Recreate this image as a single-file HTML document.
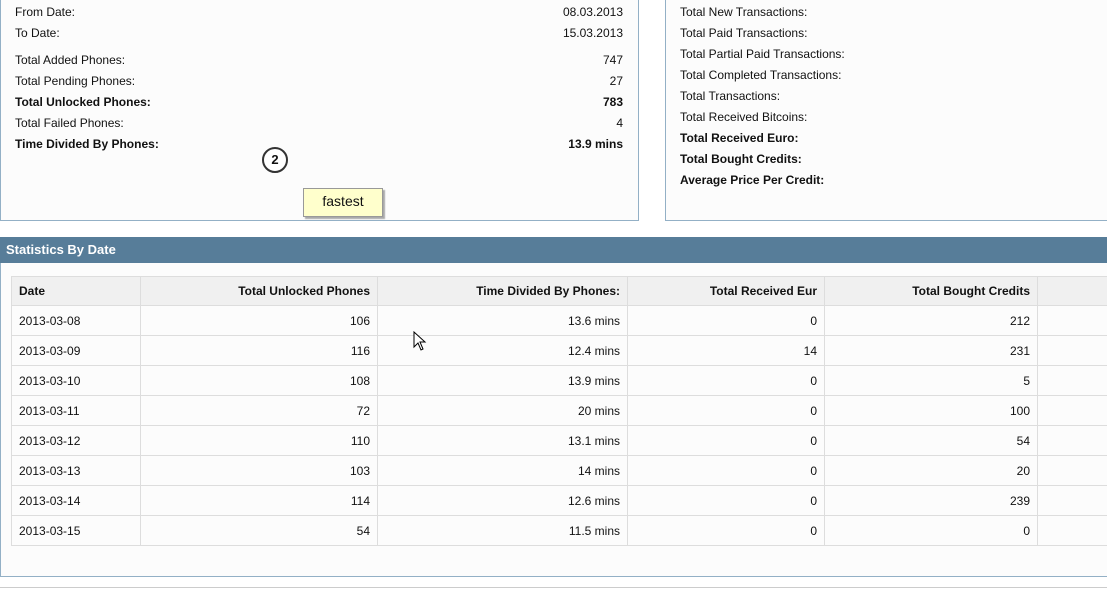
<!DOCTYPE html>
<html><head><style>
body{margin:0;width:1107px;height:597px;background:#fff;font-family:"Liberation Sans",Arial,sans-serif;font-size:12px;color:#111;position:relative;overflow:hidden}
.a{position:absolute}
.pl{left:0;top:-5px;width:637px;height:224px;border:1px solid #93b0c6;background:#fcfcfc}
.pr{left:665px;top:-5px;width:460px;height:224px;border:1px solid #93b0c6;background:#fcfcfc}
.r{position:absolute;left:14px;width:608px;height:14px;line-height:14px}
.r span{float:right}
.b{font-weight:bold}
.rr{position:absolute;left:14px;line-height:14px}
table{border-collapse:collapse;position:absolute;left:11px;top:276px;width:1120px}
td,th{border:1px solid #ddd;height:29px;padding:0 7px;font-size:12px;text-align:right;background:#fcfcfc}
th{background:#f0f0f0;font-weight:bold;height:28px}
td:first-child,th:first-child{text-align:left}
</style></head><body>
<div class="a pl">
<div class="r" style="top:9px">From Date:<span>08.03.2013</span></div>
<div class="r" style="top:30px">To Date:<span>15.03.2013</span></div>
<div class="r" style="top:57px">Total Added Phones:<span>747</span></div>
<div class="r" style="top:78px">Total Pending Phones:<span>27</span></div>
<div class="r b" style="top:99px">Total Unlocked Phones:<span>783</span></div>
<div class="r" style="top:120px">Total Failed Phones:<span>4</span></div>
<div class="r b" style="top:141px">Time Divided By Phones:<span>13.9 mins</span></div>
<div class="a" style="left:261px;top:151px;width:26px;height:26px;border:2px solid #333;border-radius:50%;background:#fff;text-align:center;line-height:22px;font-size:13px;font-weight:bold;box-sizing:border-box;">2</div>
<div class="a" style="left:302px;top:192px;width:78px;height:27px;background:#ffffcc;border:1px solid #999;box-shadow:2px 2px 1px #aaa;text-align:center;line-height:25px;font-size:14px">fastest</div>
</div>
<div class="a pr">
<div class="rr" style="top:9px">Total New Transactions:</div>
<div class="rr" style="top:30px">Total Paid Transactions:</div>
<div class="rr" style="top:51px">Total Partial Paid Transactions:</div>
<div class="rr" style="top:72px">Total Completed Transactions:</div>
<div class="rr" style="top:93px">Total Transactions:</div>
<div class="rr" style="top:114px">Total Received Bitcoins:</div>
<div class="rr b" style="top:135px">Total Received Euro:</div>
<div class="rr b" style="top:156px">Total Bought Credits:</div>
<div class="rr b" style="top:177px">Average Price Per Credit:</div>
</div>
<div class="a" style="left:0;top:237px;width:1107px;height:26px;background:#577d99;color:#fff;font-weight:bold;font-size:13px;line-height:26px;padding-left:6px;box-sizing:border-box">Statistics By Date</div>
<div class="a" style="left:0;top:263px;width:1120px;height:313px;border-left:1px solid #93b0c6;border-bottom:1px solid #93b0c6;background:#fcfcfc"></div>
<div class="a" style="left:0;top:587px;width:1107px;height:1px;background:#ccc"></div>
<table>
<tr><th style="width:114px">Date</th><th style="width:222px">Total Unlocked Phones</th><th style="width:235px">Time Divided By Phones:</th><th style="width:182px">Total Received Eur</th><th style="width:198px">Total Bought Credits</th><th></th></tr>
<tr><td>2013-03-08</td><td>106</td><td>13.6 mins</td><td>0</td><td>212</td><td></td></tr>
<tr><td>2013-03-09</td><td>116</td><td>12.4 mins</td><td>14</td><td>231</td><td></td></tr>
<tr><td>2013-03-10</td><td>108</td><td>13.9 mins</td><td>0</td><td>5</td><td></td></tr>
<tr><td>2013-03-11</td><td>72</td><td>20 mins</td><td>0</td><td>100</td><td></td></tr>
<tr><td>2013-03-12</td><td>110</td><td>13.1 mins</td><td>0</td><td>54</td><td></td></tr>
<tr><td>2013-03-13</td><td>103</td><td>14 mins</td><td>0</td><td>20</td><td></td></tr>
<tr><td>2013-03-14</td><td>114</td><td>12.6 mins</td><td>0</td><td>239</td><td></td></tr>
<tr><td>2013-03-15</td><td>54</td><td>11.5 mins</td><td>0</td><td>0</td><td></td></tr>
</table>
<svg class="a" style="left:413px;top:331px" width="14" height="20"><path d="M1 1 L1 16 L5 12 L8 19 L10 18 L7 11 L12 11 Z" fill="#fff" stroke="#000"/></svg>
</body></html>
